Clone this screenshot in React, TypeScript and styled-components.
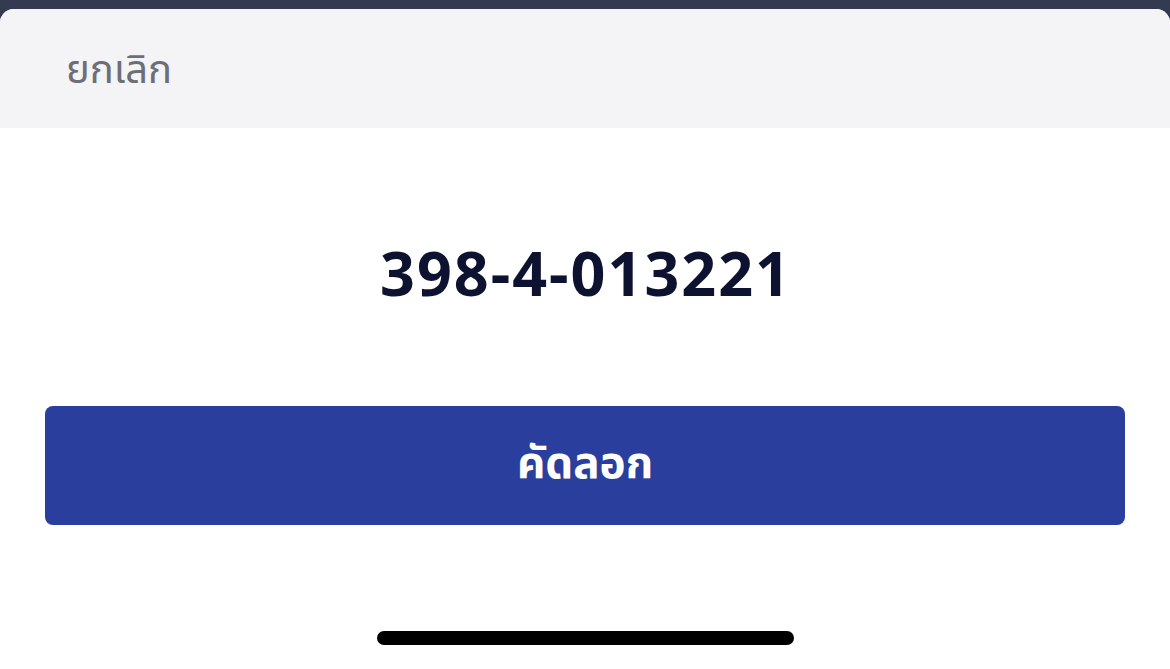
import React from "react";
import styled, { createGlobalStyle } from "styled-components";

const Global = createGlobalStyle`
  html, body { margin: 0; padding: 0; background: #343a50; }
  body { width: 1170px; height: 669px; overflow: hidden; font-family: "Noto Sans", "Noto Sans Thai", sans-serif; }
`;

const Screen = styled.div`
  width: 1170px;
  height: 669px;
  background: #343a50;
  padding-top: 9px;
  box-sizing: border-box;
  display: flex;
  flex-direction: column;
`;

const Sheet = styled.div`
  flex: 1;
  background: #ffffff;
  border-radius: 14px 14px 0 0;
  overflow: hidden;
  display: flex;
  flex-direction: column;
`;

const Header = styled.div`
  height: 119px;
  background: #f4f4f6;
  display: flex;
  align-items: center;
  padding-left: 66px;
  box-sizing: border-box;
`;

const Cancel = styled.span`
  font-size: 40px;
  color: #6e6e78;
  font-weight: 400;
  margin-top: 4px;
`;

const Body = styled.div`
  flex: 1;
  display: flex;
  flex-direction: column;
  align-items: center;
  padding: 0 45px;
`;

const Account = styled.div`
  margin-top: 104px;
  height: 80px;
  display: flex;
  align-items: center;
  font-size: 61px;
  font-weight: 700;
  color: #0c1230;
  letter-spacing: 2px;
  padding-left: 2px;
`;

const CopyButton = styled.button`
  margin-top: 94px;
  width: 100%;
  height: 119px;
  background: #2a3f9d;
  border: none;
  border-radius: 8px;
  color: #ffffff;
  font-family: inherit;
  font-size: 44px;
  font-weight: 700;
  display: flex;
  align-items: center;
  justify-content: center;
  padding: 0 0 2px;
`;

const HomeIndicator = styled.div`
  margin-top: 106px;
  width: 417px;
  height: 14px;
  border-radius: 7px;
  background: #000000;
`;

export default function App() {
  return (
    <>
      <Global />
      <Screen>
        <Sheet>
          <Header>
            <Cancel>ยกเลิก</Cancel>
          </Header>
          <Body>
            <Account>398-4-013221</Account>
            <CopyButton>คัดลอก</CopyButton>
            <HomeIndicator />
          </Body>
        </Sheet>
      </Screen>
    </>
  );
}
